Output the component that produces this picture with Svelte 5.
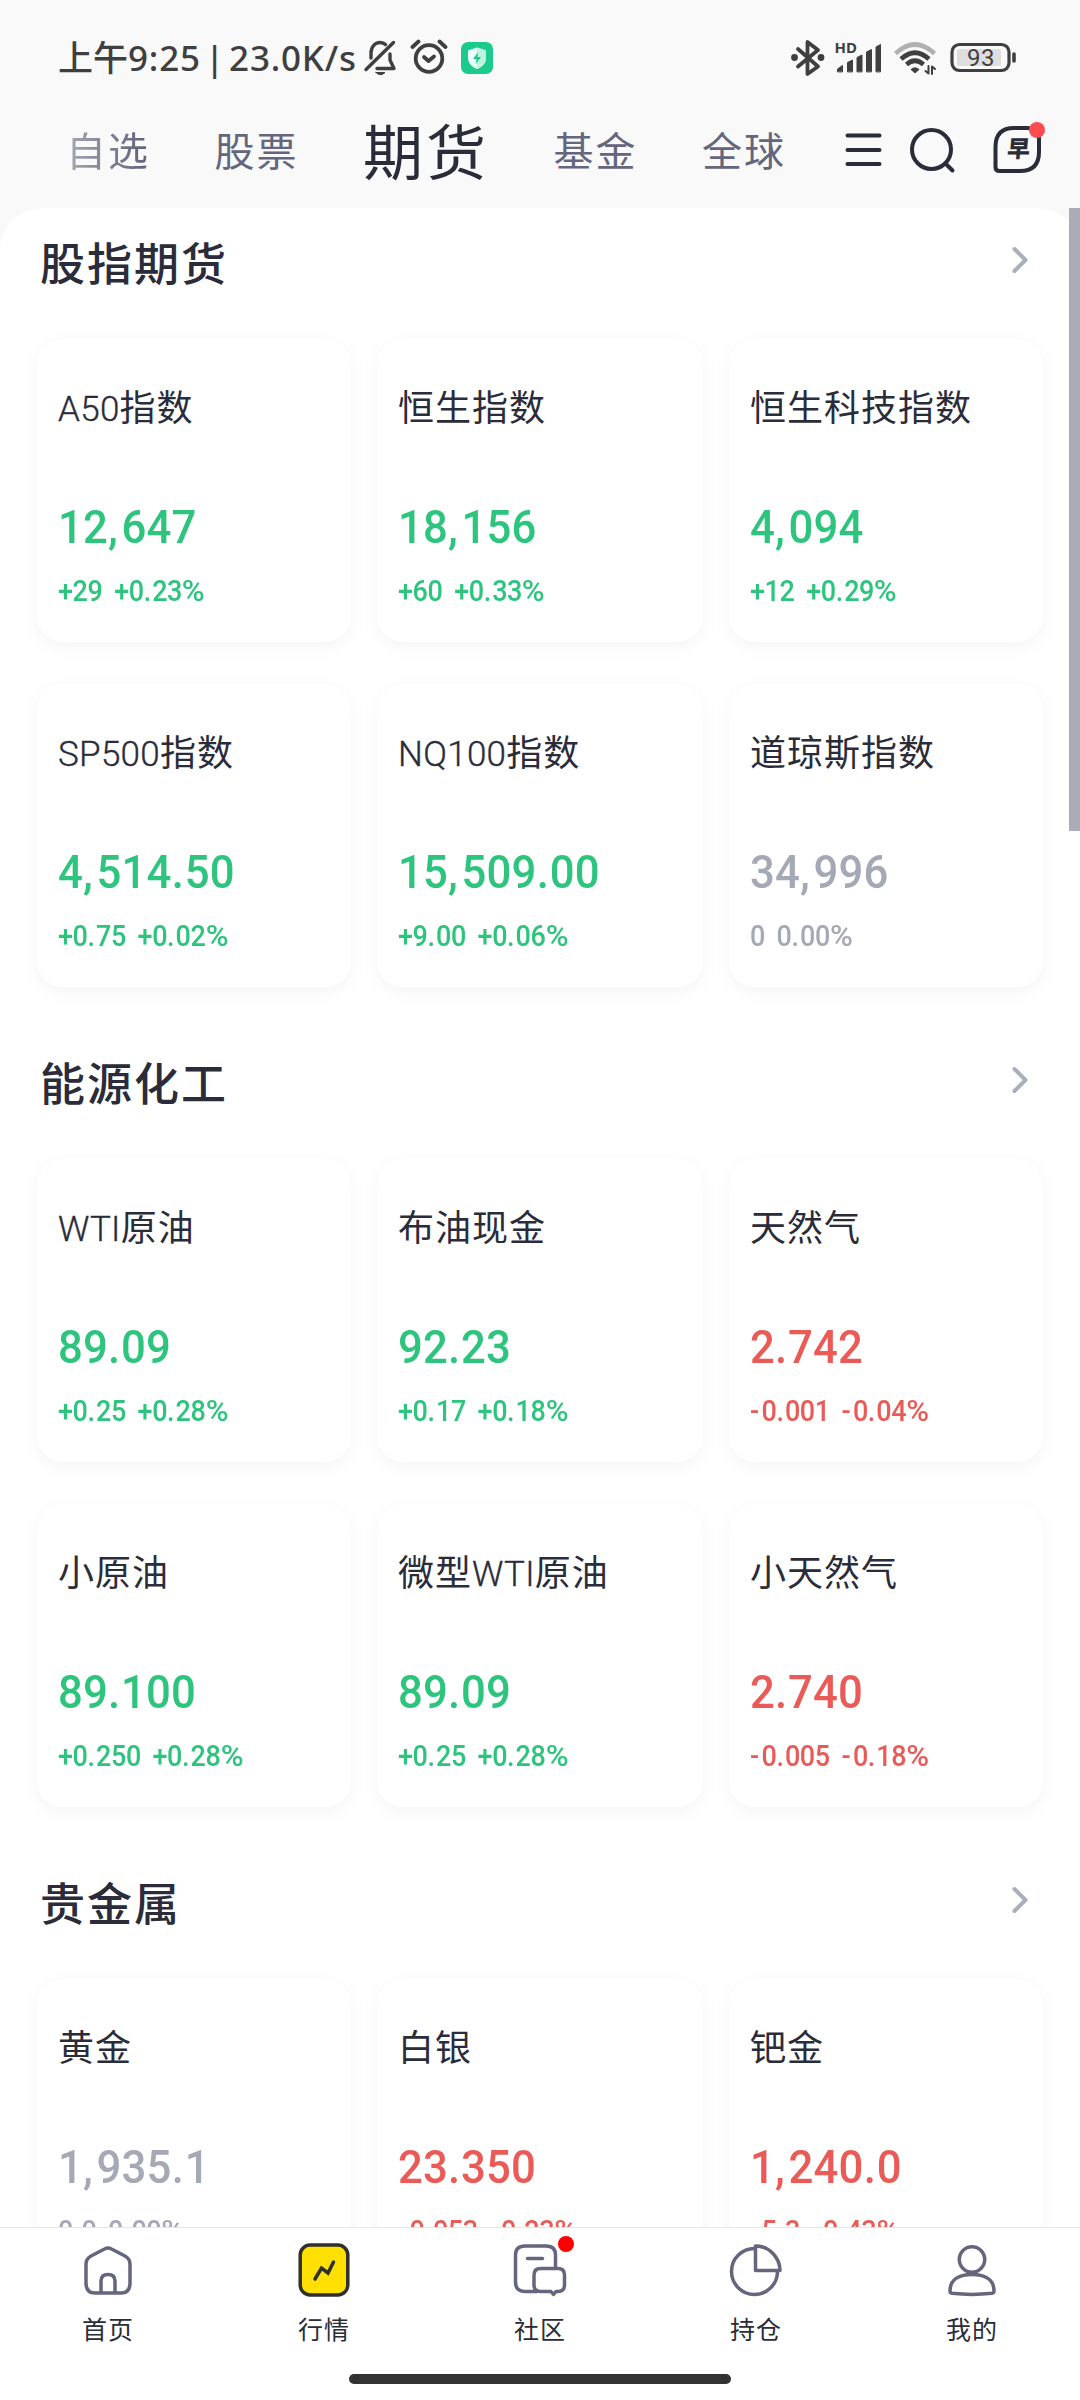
<script>
  const sections = [
    {
      title: '股指期货',
      items: [
        { name: 'A50指数', value: '12,647', diff: '+29', pct: '+0.23%', dir: 'up' },
        { name: '恒生指数', value: '18,156', diff: '+60', pct: '+0.33%', dir: 'up' },
        { name: '恒生科技指数', value: '4,094', diff: '+12', pct: '+0.29%', dir: 'up' },
        { name: 'SP500指数', value: '4,514.50', diff: '+0.75', pct: '+0.02%', dir: 'up' },
        { name: 'NQ100指数', value: '15,509.00', diff: '+9.00', pct: '+0.06%', dir: 'up' },
        { name: '道琼斯指数', value: '34,996', diff: '0', pct: '0.00%', dir: 'flat' }
      ]
    },
    {
      title: '能源化工',
      items: [
        { name: 'WTI原油', value: '89.09', diff: '+0.25', pct: '+0.28%', dir: 'up' },
        { name: '布油现金', value: '92.23', diff: '+0.17', pct: '+0.18%', dir: 'up' },
        { name: '天然气', value: '2.742', diff: '-0.001', pct: '-0.04%', dir: 'down' },
        { name: '小原油', value: '89.100', diff: '+0.250', pct: '+0.28%', dir: 'up' },
        { name: '微型WTI原油', value: '89.09', diff: '+0.25', pct: '+0.28%', dir: 'up' },
        { name: '小天然气', value: '2.740', diff: '-0.005', pct: '-0.18%', dir: 'down' }
      ]
    },
    {
      title: '贵金属',
      items: [
        { name: '黄金', value: '1,935.1', diff: '0.0', pct: '0.00%', dir: 'flat' },
        { name: '白银', value: '23.350', diff: '-0.053', pct: '-0.23%', dir: 'down' },
        { name: '钯金', value: '1,240.0', diff: '-5.3', pct: '-0.43%', dir: 'down' }
      ]
    }
  ];

  const parts = (text) => text.match(/[.,%-]|[^.,%-]+/g);
  const words = (text) => text.match(/[A-Z0-9]+|[^A-Z0-9]+/g);
</script>

{#snippet number(text)}{#each parts(text) as p}<span class:point={p === '.'} class:comma={p === ','} class:minus={p === '-'} class:percent={p === '%'}>{p}</span>{/each}{/snippet}

<div class="screen">
  <div class="status">
    <div class="clock">上午<span>9:25 | 23.0K/s</span></div>
    <svg class="bell" width="34" height="38" viewBox="0 0 34 38" fill="none" stroke="#3f3f3f" stroke-width="3.4" stroke-linecap="round" stroke-linejoin="round">
      <path d="M8 19V14C8 8 12 3.500 17 3.500C19.500 3.500 21 4 22.500 5.500M27 15V21L31 29.500H14" />
      <path d="M30.500 3.500L3 30.500" />
      <path d="M13 33.500H22Q17.500 38 13 33.500Z" fill="#3f3f3f" stroke-width="1" />
    </svg>
    <svg class="alarm" width="38" height="38" viewBox="0 0 38 38" fill="none" stroke="#3f3f3f" stroke-width="3.800" stroke-linecap="round" stroke-linejoin="round">
      <circle cx="19" cy="20.500" r="13.300" />
      <path d="M14 19L18.500 23L24 18.500" />
      <path d="M2.500 9L8.500 3.500M35.500 9L29.500 3.500" />
    </svg>
    <svg class="guard" width="32" height="32" viewBox="0 0 32 32">
      <rect width="32" height="32" rx="7" fill="#1ccb8c" />
      <path d="M16 5.500L25 8.500V16C25 21 21 25 16 27C11 25 7 21 7 16V8.500Z" fill="#e9fff7" />
      <path d="M16 5.500L25 8.500V16C25 21 21 25 16 27Z" fill="#bff5df" />
      <path d="M17 10L12 17H15.500L15 22L20 15H16.500Z" fill="#1ccb8c" />
    </svg>
    <svg class="signals" width="236" height="40" viewBox="0 0 236 40" fill="none" stroke="#3f3f3f" stroke-linecap="round" stroke-linejoin="round">
      <path d="M6 11L26 28.500L15.500 36V4L26 12L6 28.500" stroke-width="3.800" />
      <circle cx="2.500" cy="19.500" r="3.400" fill="#3f3f3f" stroke="none" />
      <circle cx="29" cy="19.500" r="3.400" fill="#3f3f3f" stroke="none" />
      <text class="hd" x="42.500" y="15">HD</text>
      <g fill="#3f3f3f" stroke="#3f3f3f" stroke-width="1">
        <path d="M45.500 33.500V31L50.500 27.500V33.500Z" />
        <path d="M55.500 33.500V24.500L60.500 22V33.500Z" />
        <path d="M65 33.500V19.500L70 17V33.500Z" />
        <path d="M74.500 33.500V14L79.500 11.500V33.500Z" />
        <path d="M84 33.500V9L88.500 6.500V33.500Z" />
      </g>
      <path d="M103.500 15.500Q123 -2.500 142.500 15.500" stroke="#b0b0b0" stroke-width="4.600" stroke-linecap="butt" />
      <path d="M109 21Q123 8.500 137 21M114.500 26.500Q123 19 131.500 26.500" stroke-width="4.600" stroke-linecap="butt" />
      <path d="M119.500 31.500Q123 28.500 126.500 31.500L123 34.500Z" fill="#3f3f3f" stroke-width="1.500" />
      <path d="M136.500 28V35.500L133.500 33M140 36V28.500L143 31" stroke-width="2" />
      <rect x="160" y="6.500" width="57" height="26" rx="7.500" stroke-width="3.200" />
      <rect x="165" y="11" width="44" height="17" rx="2" fill="#dedede" stroke="none" />
      <path d="M222 16V23" stroke-width="3.600" />
      <text class="batt" x="175" y="28">93</text>
    </svg>
  </div>

  <div class="tabs">
    <span class="tab first">自选</span>
    <span class="tab">股票</span>
    <span class="tab active">期货</span>
    <span class="tab">基金</span>
    <span class="tab">全球</span>
    <div class="tools">
      <svg width="200" height="60" viewBox="0 0 200 60" fill="none" stroke="#2b2c3a" stroke-width="4" stroke-linecap="round">
        <path d="M7.500 16.500H39.500M7.500 31H39.500M7.500 45H39.500" />
        <circle cx="91.500" cy="30.500" r="19.500" />
        <path d="M106 45L112.500 51.500" />
        <path d="M155.500 28Q155.500 9 174 9H187Q199 9 199 20V33Q199 52 180 52H159.500Q155.500 52 155.500 48Z" />
        <text class="early" x="170" y="38.500" transform="skewX(-5)">早</text>
        <circle cx="197" cy="11" r="8" fill="#fb4d4f" stroke="none" />
      </svg>
    </div>
  </div>

  <main>
    <div class="panel">
      {#each sections as s}
        <section>
          <header>
            <h2>{s.title}</h2>
            <svg width="20" height="30" viewBox="0 0 20 30" fill="none" stroke="#a9afba" stroke-width="4" stroke-linecap="round" stroke-linejoin="round"><path d="M4.500 4L15.500 15L4.500 26" /></svg>
          </header>
          <div class="grid">
            {#each s.items as q}
              <article class={q.dir}>
                <div class="name">{#each words(q.name) as w}<span class:latin={/[A-Z0-9]/.test(w)}>{w}</span>{/each}</div>
                <div class="value">{@render number(q.value)}</div>
                <div class="change"><span>{@render number(q.diff)}</span><span>{@render number(q.pct)}</span></div>
              </article>
            {/each}
          </div>
        </section>
      {/each}
    </div>
    <div class="scrollbar"></div>
  </main>

  <nav>
    <div class="items">
      <div class="item">
        <svg width="60" height="60" viewBox="0 0 60 60" fill="none" stroke="#63667c" stroke-width="3.500" stroke-linejoin="round">
          <path d="M26.500 8Q30 6 33.500 8L47 15Q52 18 52 23V42Q52 52 43 52H17Q8 52 8 42V23Q8 18 13 15Z" />
          <path d="M23 52V40Q23 33.500 30 33.500Q37 33.500 37 40V52" />
        </svg>
        <span>首页</span>
      </div>
      <div class="item">
        <svg width="60" height="60" viewBox="0 0 60 60" fill="none" stroke="#2f2f2c" stroke-width="3.500" stroke-linejoin="round" stroke-linecap="round">
          <rect x="6.200" y="4" width="47.600" height="50" rx="10" fill="#ffe000" />
          <path d="M21 38L27.500 27L34 32L39.500 21" stroke-linejoin="miter" />
        </svg>
        <span>行情</span>
      </div>
      <div class="item">
        <svg width="60" height="60" viewBox="0 0 60 60" fill="none" stroke="#63667c" stroke-width="3.500" stroke-linejoin="round" stroke-linecap="round">
          <path d="M27 50.500H15Q5.500 50.500 5.500 41V14Q5.500 5 15 5H36Q45.500 5 45.500 14V27" />
          <path d="M17.500 17.500H32.500" />
          <path d="M30.500 27.500H48Q54.500 27.500 54.500 34V44Q54.500 50.500 48 50.500H46L43.500 53.500L41 50.500H30.500Q24 50.500 24 44V34Q24 27.500 30.500 27.500Z" />
        </svg>
        <i class="dot"></i>
        <span>社区</span>
      </div>
      <div class="item">
        <svg width="60" height="60" viewBox="0 0 60 60" fill="none" stroke="#63667c" stroke-width="3.500" stroke-linejoin="round">
          <path d="M28.700 7.500A23 23 0 1 0 51.500 30.500" />
          <path d="M29.500 5V29.500H54Q54 20 47 12.500Q40 5 29.500 5Z" />
        </svg>
        <span>持仓</span>
      </div>
      <div class="item">
        <svg width="60" height="60" viewBox="0 0 60 60" fill="none" stroke="#63667c" stroke-width="3.500" stroke-linejoin="round">
          <circle cx="30" cy="18.500" r="12.700" />
          <path d="M30 33.500C42 33.500 52 38 52 50Q52 52 50 52.300Q30 54.500 10 52.300Q8 52 8 50C8 38 18 33.500 30 33.500Z" />
        </svg>
        <span>我的</span>
      </div>
    </div>
    <div class="home"></div>
  </nav>
</div>

<style>
  :global(body) { margin: 0; }
  .screen {
    width: 1080px; height: 2400px; overflow: hidden;
    display: flex; flex-direction: column;
    background: #f9f9f9; color: #2b2c3a;
    font-family: "Noto Sans CJK SC", sans-serif;
  }
  .status { height: 108px; flex: none; display: flex; align-items: flex-start; color: #3f3f3f; }
  .clock { margin: 31px 0 0 58px; width: 305px; font-size: 35px; line-height: 50px; white-space: nowrap; font-weight: 500; }
  .clock span { font-family: "Noto Sans", sans-serif; font-weight: 500; letter-spacing: 0.800px; word-spacing: -5.800px; }
  .bell { margin-top: 39px; }
  .alarm { margin: 38px 0 0 13px; }
  .guard { margin: 42px 0 0 13px; }
  .signals { margin: 38px 0 0 299px; overflow: visible; }
  .hd { font: 700 15px "Noto Sans", sans-serif; fill: #3f3f3f; stroke: none; }
  .batt { font: 400 24px Roboto, sans-serif; letter-spacing: 0.500px; fill: #3f3f3f; stroke: none; }

  .tabs { height: 100px; flex: none; display: flex; align-items: center; gap: 64.500px; padding: 0 0 18px 66px; box-sizing: border-box; white-space: nowrap; }
  .tab { font-size: 40px; letter-spacing: 2px; color: #63667c; line-height: 60px; }
  .first { background: linear-gradient(90deg, #a5a7b4, #63667c 90%); background-clip: text; color: transparent; }
  .active { font-size: 60px; letter-spacing: 3px; color: #2b2c3a; line-height: 80px; }
  .tools { margin-left: -10.500px; }
  .tools svg { display: block; overflow: visible; }
  .early { font: 900 23px "Noto Sans CJK SC", sans-serif; fill: #2b2c3a; stroke: none; }

  main { position: relative; flex: 1; min-height: 0; }
  .panel { height: 100%; overflow: hidden; background: #fff; border-radius: 42px 42px 0 0; }
  section { height: 820px; }
  header { height: 131px; box-sizing: border-box; padding: 21px 50px 0 40px; display: flex; justify-content: space-between; align-items: flex-start; }
  header svg { margin-top: 16px; }
  h2 { margin: 0; font-size: 45px; line-height: 66px; letter-spacing: 2px; font-weight: 500; }
  .grid { display: grid; grid-template-columns: 314px 326px 314px; gap: 42px 26px; padding-left: 37px; }
  article { height: 303px; box-sizing: border-box; padding: 39px 0 0 21px; border-radius: 26px; background: #fff; box-shadow: 0 5px 18px rgba(0, 0, 0, 0.042); white-space: nowrap; }
  .name { height: 54px; line-height: 54px; font-size: 36px; letter-spacing: 1px; }
  .latin { font-family: Roboto, sans-serif; font-size: 35px; font-weight: 350; letter-spacing: 0.300px; -webkit-text-stroke: 0.350px currentColor; }
  /* Figures are drawn slightly condensed */
  .value { margin-top: 67px; font: 500 47px/56px Roboto, sans-serif; letter-spacing: 0.200px; transform: scaleX(0.93); transform-origin: 0 0; }
  .value .point { letter-spacing: 0.900px; }
  .value .comma { letter-spacing: 4px; }
  .change { margin-top: 19px; display: flex; gap: 12.500px; font: 500 29px/34px Roboto, sans-serif; letter-spacing: -0.400px; transform: scaleX(0.93); transform-origin: 0 0; }
  .change .point { letter-spacing: 1px; }
  .change .minus { letter-spacing: 2.500px; }
  .change .percent { display: inline-block; transform: scaleX(1.15); transform-origin: 0 0; }
  .up .value, .up .change { color: #2dc47e; }
  .down .value, .down .change { color: #ea5b58; }
  .flat .value, .flat .change { color: #a5a9b6; }
  .scrollbar { position: absolute; right: 0; top: 0; width: 11px; height: 623px; background: #acacb9; }

  nav { flex: none; height: 173px; border-top: 1px solid #e6e6e8; background: #fff; box-sizing: border-box; }
  .items { display: grid; grid-template-columns: repeat(5, 1fr); height: 146px; }
  .item { position: relative; display: flex; flex-direction: column; align-items: center; padding-top: 13px; box-sizing: border-box; }
  .item span { margin-top: 9px; font-size: 25px; letter-spacing: 1px; line-height: 36px; }
  .dot { position: absolute; left: 126px; top: 8px; width: 16px; height: 16px; border-radius: 50%; background: #f00; }
  .home { width: 382px; height: 10px; margin: 0 auto; border-radius: 5px; background: #333; }
</style>
